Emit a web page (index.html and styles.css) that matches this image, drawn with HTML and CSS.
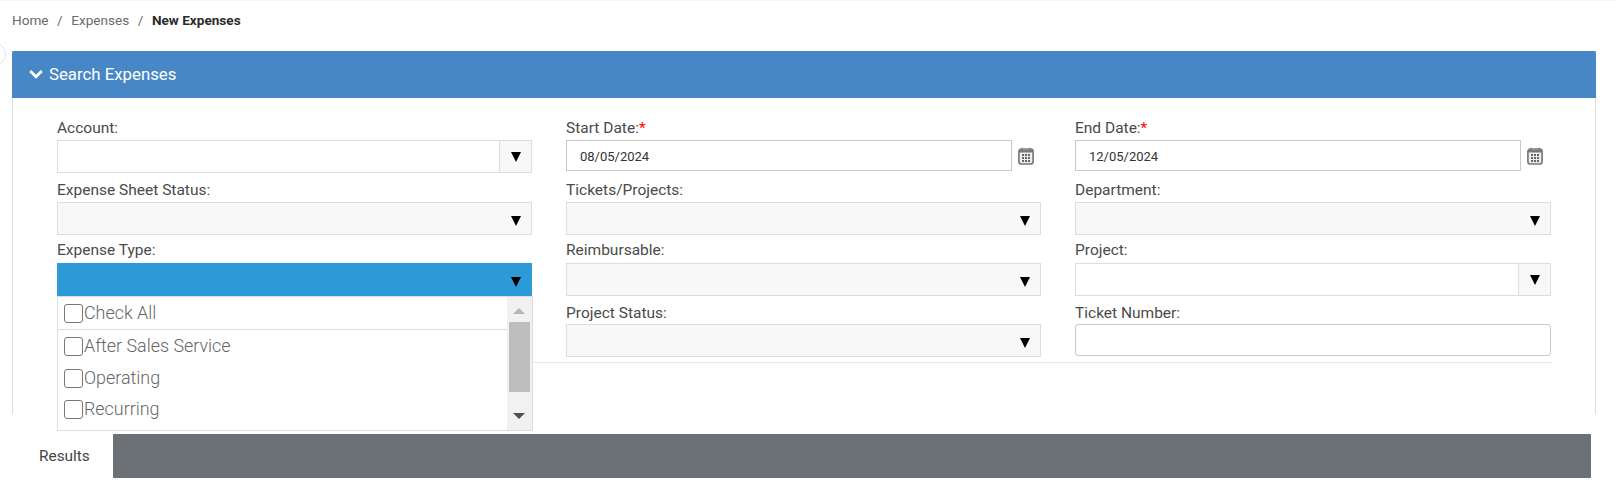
FILE: index.html
```html
<!DOCTYPE html>
<html lang="en">
<head>
<meta charset="utf-8">
<title>New Expenses</title>
<link rel="stylesheet" href="styles.css">
</head>
<body>
<div class="toggle"></div>
<nav class="crumbs"><span>Home</span><i>/</i><span>Expenses</span><i>/</i><b>New Expenses</b></nav>
<section class="panel">
  <header class="panel-head">
    <svg class="chev" viewBox="0 0 14 10" width="14" height="10"><path d="M1.200 2 7 7.800 12.800 2" fill="none" stroke="#fff" stroke-width="2.800"/></svg>
    <span>Search Expenses</span>
  </header>
  <div class="panel-body">
    <form class="grid">
      <div class="field first"><label>Account:</label><div class="combo"><span class="fill"></span><span class="btn"><s class="arrow"></s></span></div></div>
      <div class="field first"><label>Start Date:<em>*</em></label><div class="date"><div class="dinput">08/05/2024</div>
        <svg class="cal" viewBox="0 0 16 18" width="16" height="18"><rect x=".9" y="2" width="14.200" height="15" rx="2.500" fill="#eee" stroke="#7a7a7a" stroke-width="1.700"/><path d="M1 3h14v2.500H1z" fill="#7a7a7a"/><path d="M4 .8v2.500M12 .8v2.500" stroke="#7a7a7a" stroke-width="1.200"/><path d="M4 7h2v2H4zM7 7h2v2H7zM10 7h2v2h-2zM4 10h2v2H4zM7 10h2v2H7zM10 10h2v2h-2zM4 13h2v2H4zM7 13h2v2H7zM10 13h2v2h-2z" fill="#666"/></svg></div></div>
      <div class="field first"><label>End Date:<em>*</em></label><div class="date"><div class="dinput">12/05/2024</div>
        <svg class="cal" viewBox="0 0 16 18" width="16" height="18"><rect x=".9" y="2" width="14.200" height="15" rx="2.500" fill="#eee" stroke="#7a7a7a" stroke-width="1.700"/><path d="M1 3h14v2.500H1z" fill="#7a7a7a"/><path d="M4 .8v2.500M12 .8v2.500" stroke="#7a7a7a" stroke-width="1.200"/><path d="M4 7h2v2H4zM7 7h2v2H7zM10 7h2v2h-2zM4 10h2v2H4zM7 10h2v2H7zM10 10h2v2h-2zM4 13h2v2H4zM7 13h2v2H7zM10 13h2v2h-2z" fill="#666"/></svg></div></div>

      <div class="field second"><label>Expense Sheet Status:</label><div class="select"><s class="arrow"></s></div></div>
      <div class="field second"><label>Tickets/Projects:</label><div class="select"><s class="arrow"></s></div></div>
      <div class="field second"><label>Department:</label><div class="select"><s class="arrow"></s></div></div>

      <div class="field open-field"><label>Expense Type:</label><div class="select active"><s class="arrow"></s></div>
        <div class="menu">
          <div class="menu-items">
            <div class="opt all"><span class="box"></span>Check All</div>
            <div class="opt"><span class="box"></span>After Sales Service</div>
            <div class="opt"><span class="box"></span>Operating</div>
            <div class="opt last"><span class="box"></span>Recurring</div>
          </div>
          <div class="scroll"><s class="up"></s><span class="thumb"></span><s class="down"></s></div>
        </div>
      </div>
      <div class="field"><label>Reimbursable:</label><div class="select"><s class="arrow"></s></div></div>
      <div class="field"><label>Project:</label><div class="combo"><span class="fill"></span><span class="btn"><s class="arrow"></s></span></div></div>

      <div class="field"></div>
      <div class="field fourth"><label>Project Status:</label><div class="select"><s class="arrow"></s></div></div>
      <div class="field fourth"><label>Ticket Number:</label><div class="text"></div></div>
    </form>
    <hr class="rule">
  </div>
</section>
<div class="tabs"><div class="tab">Results</div><div class="tabfill"></div></div>
</body>
</html>
```
FILE: styles.css
```css
* { box-sizing: border-box; }
html, body { margin: 0; padding: 0; }
body { width: 1616px; height: 493px; background: #fff; font-family: Roboto, "Liberation Sans", sans-serif; font-size: 14px; color: #444; overflow: hidden; position: relative; }
.toggle { position: absolute; left: -18px; top: 42px; width: 24px; height: 24px; border: 1px solid #e4e4e4; border-radius: 50%; background: #fff; }
.crumbs { height: 51px; padding: 11px 0 0 12px; font-size: 13.600px; line-height: 16px; color: #6b6b6b; display: flex; border-top: 1px solid #f7f7f7; }
.crumbs i { font-style: normal; margin: 0 8.500px; }
.crumbs b { color: #2b2b2b; font-weight: 700; }
.panel { margin: 0 20px 0 12px; height: 363px; border-left: 1px solid #ddd; border-right: 1px solid #ddd; }
.panel-head { margin: 0 -1px; height: 47px; padding: 0 0 1px 17px; background: #4787c5; color: #fff; font-size: 16.800px; display: flex; align-items: center; gap: 6px; border-radius: 2px 2px 0 0; }
.panel-body { padding: 18px 44px 0 44px; }
.grid { display: grid; grid-template-columns: 475px 475px 476px; column-gap: 34px; grid-auto-rows: 61px; }
.field { position: relative; }
.field label { display: block; height: 25px; padding-top: 2px; line-height: 20px; font-size: 15.500px; color: #4a4a4a; }
.field.first label { height: 24px; }
.field.second label { padding-top: 3px; }
.field.fourth label { padding-top: 4px; }
.field em { color: #f00; font-style: normal; }
.select, .combo, .text, .dinput { height: 33px; border: 1px solid #ddd; }
.select { background: #f8f8f8; position: relative; }
.select .arrow { position: absolute; right: 10px; top: 13px; }
.select.active { background: #2b9ad6; border-color: #2b9ad6; }
.combo { display: flex; background: #fff; }
.fill { flex: 1; }
.btn { width: 32px; border-left: 1px solid #ddd; background: #f8f8f8; display: flex; align-items: center; justify-content: center; }
.arrow { display: block; width: 0; height: 0; border-left: 5.500px solid transparent; border-right: 5.500px solid transparent; border-top: 10px solid #000; text-decoration: none; }
.date { display: flex; align-items: center; gap: 6px; }
.dinput { width: 446px; height: 31px; border: 1px solid #c8c8c8; padding: 1px 0 0 13px; line-height: 29px; font-size: 13px; color: #333; background: #fff; }
.cal { flex: none; }
.text { border: 1px solid #c8c8c8; border-radius: 3px; height: 32px; }
.menu { position: absolute; left: 0; top: 58px; width: 476px; height: 135px; background: #fff; border: 1px solid #ddd; display: flex; z-index: 2; }
.menu-items { flex: 1; }
.opt { height: 32px; display: flex; align-items: center; padding: 0 0 2px 6px; font-size: 17.900px; font-weight: 300; color: #666; }
.opt.all { height: 33px; border-bottom: 1px solid #ddd; }
.opt.last { height: 30px; }
.box { width: 19px; height: 19px; margin: 2px 1px 0 0; border: 1px solid #777; border-radius: 3px; background: #fff; flex: none; }
.scroll { width: 25px; background: #f1f1f1; position: relative; padding: 25px 2px 0; }
.thumb { display: block; height: 70px; background: #bdbdbd; }
.up, .down { position: absolute; left: 6px; width: 0; height: 0; border-left: 6px solid transparent; border-right: 6px solid transparent; }
.up { top: 11px; border-bottom: 6px solid #b5b5b5; }
.down { bottom: 11px; border-top: 6px solid #505050; }
.rule { border: 0; border-top: 1px solid #e9e9e9; width: 1032px; margin: 2px 0 0 463px; }
.tabs { display: flex; height: 44px; margin: 20px 25px 0 12px; }
.tab { width: 101px; padding-left: 27px; line-height: 45px; font-size: 15.400px; color: #444; background: #fff; }
.tabfill { flex: 1; background: #6a7073; }
```
